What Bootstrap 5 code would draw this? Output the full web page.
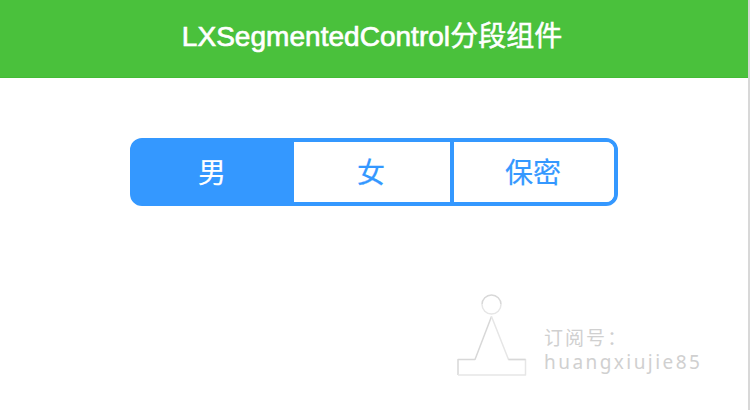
<!DOCTYPE html>
<html lang="zh-CN">
<head>
<meta charset="utf-8">
<meta name="viewport" content="width=device-width, initial-scale=1">
<title>LXSegmentedControl</title>
<link href="https://cdn.jsdelivr.net/npm/bootstrap@5.3.0/dist/css/bootstrap.min.css" rel="stylesheet">
<style>
body{font-family:"Liberation Sans","Noto Sans CJK SC",sans-serif;height:410px;border-right:2px solid #d8d8d8;background:#fff}
.title-bar{height:78px;background:#4ac13c;border-bottom:1px solid #44bb36;padding:0 4px 4px 0}
.title-bar h1{font-size:28px;line-height:40px;font-weight:400;-webkit-text-stroke:.7px #fff;letter-spacing:.03px;white-space:nowrap}
.title-bar h1 span{letter-spacing:0;-webkit-text-stroke:.5px #fff}
.segments{width:488px;height:68px;margin:60px 0 0 130px;border:4px solid #3498ff;border-radius:12px;background:linear-gradient(90deg,#3498ff 50%,#fff 50%)}
.segments .btn{width:160px;border:0;border-radius:0;color:#3498ff;font-size:28px;line-height:40px;padding:3px 2px 0 0;background:#fff;-webkit-text-stroke:.2px currentColor}
.segments .btn:last-child{border-radius:0 8px 8px 0}
.segments .btn.active{background:transparent;color:#fff;padding-right:4px}
.segments .btn.ruled{border-right:4px solid #3498ff}
.signature{margin:87px 0 0 456px;gap:16px}
.signature p{font-family:"Noto Sans","Noto Sans CJK SC",sans-serif;font-size:19px;line-height:24px;letter-spacing:2.05px;color:#d0d0d0;padding-top:33px;white-space:nowrap}
.signature .account{letter-spacing:2.45px}
</style>
</head>
<body class="overflow-hidden">
<header class="title-bar d-flex align-items-center justify-content-center">
<h1 class="m-0 text-white">LXSegmentedControl<span>分段组件</span></h1>
</header>
<main>
<div class="segments d-flex" role="group">
<button type="button" class="btn active">男</button>
<button type="button" class="btn ruled">女</button>
<button type="button" class="btn">保密</button>
</div>
<div class="signature d-flex align-items-start">
<svg width="72" height="86" viewBox="0 0 72 86" fill="none" stroke-linejoin="round">
<g stroke="#d8d8d8" stroke-width="1.5"><path d="M26 11.500a9.500 9.500 0 0 1 19 0"/><path d="M2 82V66.500H19L35.500 23.500"/></g>
<g stroke="#e6e6e6" stroke-width="1.5"><path d="M26 11.500a9.500 9.500 0 0 0 19 0"/><path d="M35.500 23.500L52.500 66.500H69.500V82H2"/></g>
<path d="M52.500 66.500H69.500" stroke="#d8d8d8" stroke-width="1.5"/>
</svg>
<p class="m-0">订阅号：<br><span class="account">huangxiujie85</span></p>
</div>
</main>
<script src="https://cdn.jsdelivr.net/npm/bootstrap@5.3.0/dist/js/bootstrap.bundle.min.js"></script>
</body>
</html>
